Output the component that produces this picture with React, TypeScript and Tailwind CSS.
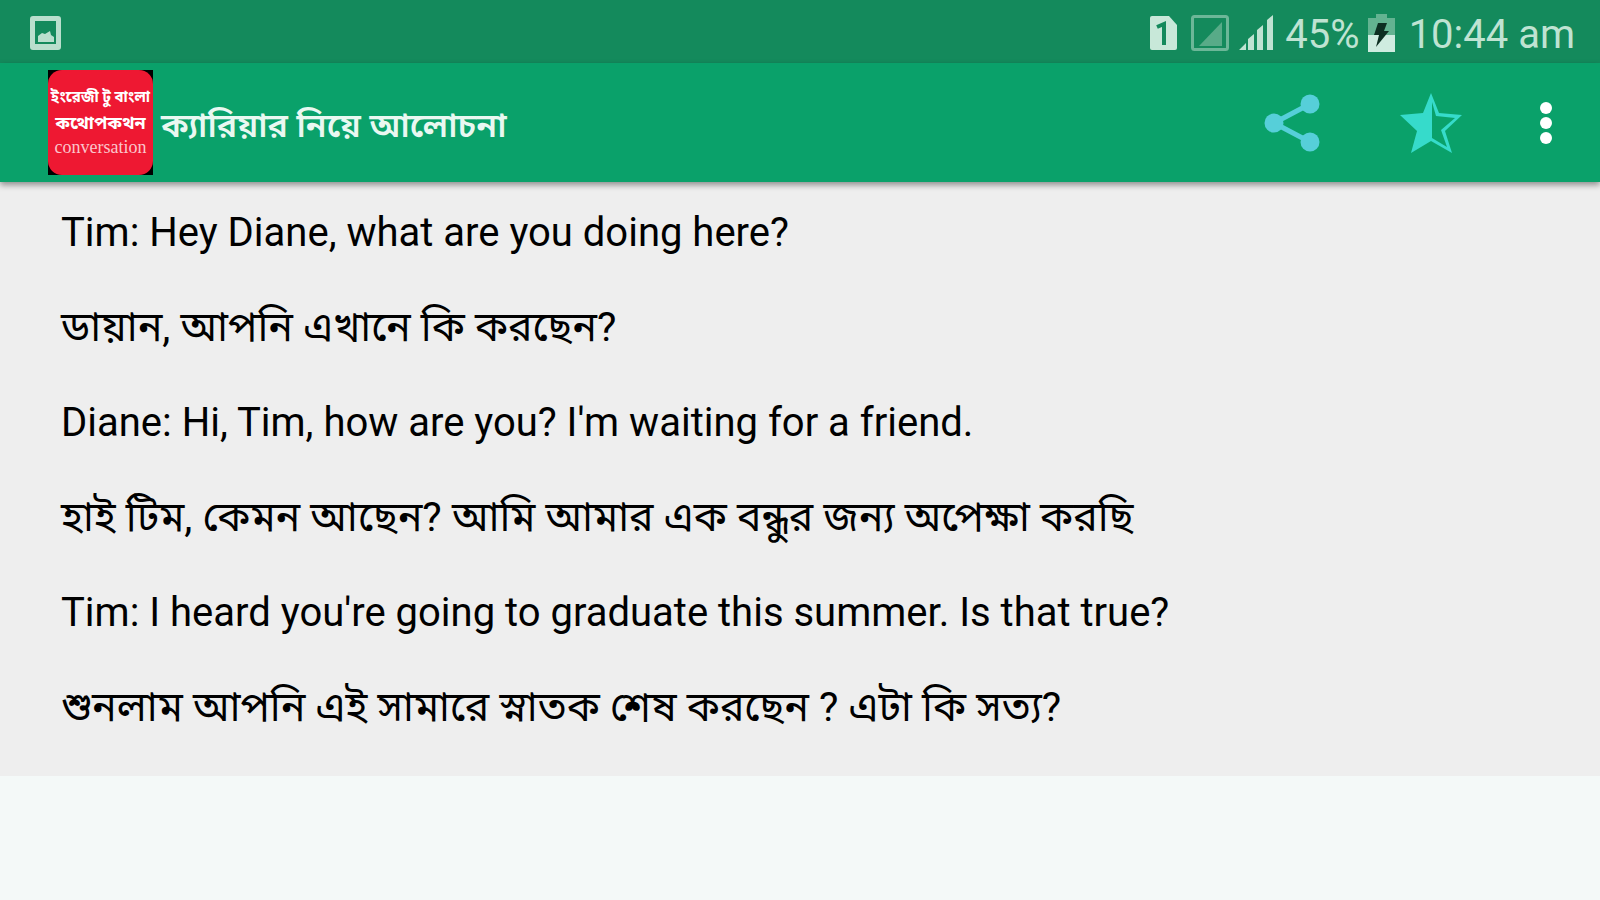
const lines = [
  { lang: 'en', text: 'Tim: Hey Diane, what are you doing here?' },
  { lang: 'bn', text: 'ডায়ান, আপনি এখানে কি করছেন?' },
  { lang: 'en', text: "Diane: Hi, Tim, how are you? I'm waiting for a friend." },
  { lang: 'bn', text: 'হাই টিম, কেমন আছেন? আমি আমার এক বন্ধুর জন্য অপেক্ষা করছি' },
  { lang: 'en', text: "Tim: I heard you're going to graduate this summer. Is that true?" },
  { lang: 'bn', text: 'শুনলাম আপনি এই সামারে স্নাতক শেষ করছেন ? এটা কি সত্য?' },
];

function StatusBar() {
  return (
    <div className="flex h-[63px] items-center justify-between bg-[#148a5c] pt-[2px] pr-[25px] pl-[30px] text-[40px] leading-[48px] text-[#bfe3d2]">
      <svg width="31" height="34" viewBox="0 0 31 34" aria-hidden="true">
        <path
          fillRule="evenodd"
          fill="#b9dfcd"
          d="M3 0h25a3 3 0 0 1 3 3v28a3 3 0 0 1-3 3H3a3 3 0 0 1-3-3V3a3 3 0 0 1 3-3zM5 5v23h21V5z"
        />
        <path fill="#b9dfcd" d="M8 26v-6l4-3 3 1 5-3 1 4 3 2v5z" />
      </svg>
      <div className="flex items-center">
        <svg width="27" height="34" viewBox="0 0 27 34" aria-hidden="true">
          <path fill="#c8e8d9" d="M2 0h17l8 9v23a2 2 0 0 1-2 2H2a2 2 0 0 1-2-2V2a2 2 0 0 1 2-2z" />
          <path fill="none" stroke="#148a5c" strokeWidth="4" d="M7 11l7-3v21" />
        </svg>
        <svg className="ml-[14px]" width="38" height="36" viewBox="0 0 38 36" aria-hidden="true">
          <path fill="#58ab88" d="M8 31L31 7v24z" />
          <rect x="1.5" y="1.5" width="35" height="33" rx="2" fill="none" stroke="#6cb798" strokeWidth="3" />
        </svg>
        <svg className="ml-[10px]" width="34" height="35" viewBox="0 0 34 35" aria-hidden="true">
          <path fill="#bfe3d2" d="M0 35l7-7v7zM9 24l6-5v16H9zM18 15l6-5v25h-6zM28 5l6-5v35h-6z" />
        </svg>
        <span className="ml-3 pt-1">45%</span>
        <svg className="ml-2" width="27" height="38" viewBox="0 0 27 38" aria-hidden="true">
          <path fill="#63b391" d="M8 0h11v4h8v18H0V4h8z" />
          <path fill="#cfece0" d="M0 21h27v17H0z" />
          <path fill="#0d2f22" d="M10 9h9l-3 8h5L8 33l3-12H6z" />
        </svg>
        <span className="ml-[14px] pt-1">10:44 am</span>
      </div>
    </div>
  );
}

function Logo() {
  return (
    <div className="h-[105px] w-[105px] shrink-0 bg-black">
      <div className="flex h-full flex-col items-center rounded-[14px] bg-[#ee1832] pt-[14px] whitespace-nowrap text-white">
        <span lang="bn" className="text-[15px] leading-[26px] font-bold">ইংরেজী টু বাংলা</span>
        <span lang="bn" className="text-[18px] leading-[26px] font-bold">কথোপকথন</span>
        <span className="font-['Liberation_Serif',serif] text-[18px] leading-[22px] text-[#fbc5cb]">conversation</span>
      </div>
    </div>
  );
}

function AppBar() {
  return (
    <header className="relative flex h-[119px] items-center bg-[#0aa16a] pl-12 shadow-[0_3px_6px_rgba(0,0,0,0.4)]">
      <Logo />
      <h1 lang="bn" className="ml-2 flex-1 pt-1 text-[34px] leading-[48px] font-semibold text-[#e9f8f1]">
        ক্যারিয়ার নিয়ে আলোচনা
      </h1>
      <button type="button" aria-label="Share" className="p-5">
        <svg width="56" height="58" viewBox="0 0 56 58">
          <path d="M46 10L10 29l36 19" fill="none" stroke="#56cfd9" strokeWidth="5" />
          <g fill="#56cfd9">
            <circle cx="10" cy="29" r="9.5" />
            <circle cx="46" cy="10" r="9.5" />
            <circle cx="46" cy="48" r="9.5" />
          </g>
        </svg>
      </button>
      <button type="button" aria-label="Favourite" className="ml-10 p-5">
        <svg width="62" height="60" viewBox="0 0 62 60">
          <path
            fill="#36dbcb"
            fillRule="evenodd"
            d="M31 0L39 20 62 22 45 38 52 60 31 48 11 60 17 38 0 22 23 20zM32 9V45L47 54 41 37 55 25 36 23z"
          />
        </svg>
      </button>
      <button type="button" aria-label="More options" className="mr-7 ml-[38px] p-5">
        <svg width="12" height="42" viewBox="0 0 12 42" fill="#fff">
          <circle cx="6" cy="6" r="6" />
          <circle cx="6" cy="21" r="6" />
          <circle cx="6" cy="36" r="6" />
        </svg>
      </button>
    </header>
  );
}

export default function App() {
  return (
    <div className="min-h-screen bg-[#f4f9f8] font-[Roboto,'Noto_Sans_Bengali','Noto_Sans',sans-serif]">
      <StatusBar />
      <AppBar />
      <main className="bg-[#eeeeee] px-[61px] pt-[3px] pb-[21px] text-[40px] leading-[95px] text-black">
        {lines.map((line) => (
          <p key={line.text} lang={line.lang} className={line.lang === 'bn' ? 'text-[41px]' : ''}>
            {line.text}
          </p>
        ))}
      </main>
    </div>
  );
}
